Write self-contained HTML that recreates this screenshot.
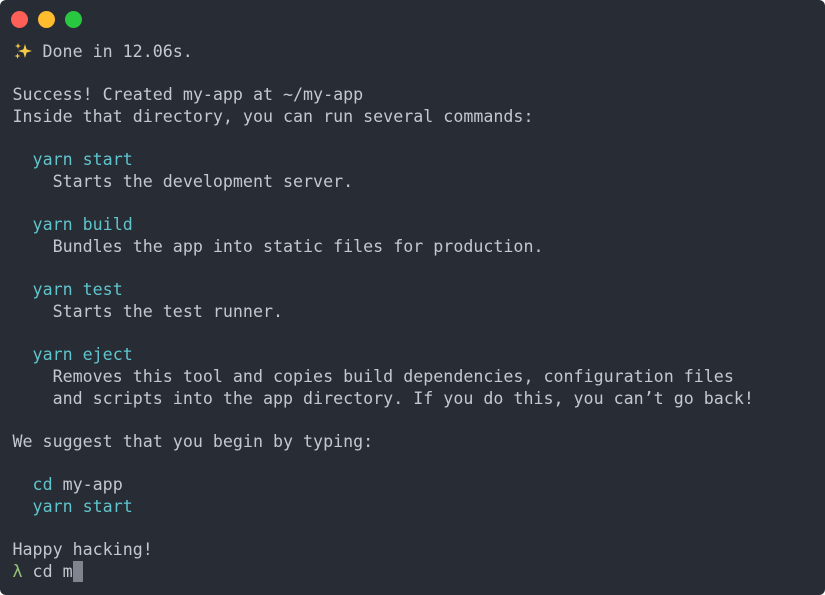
<!DOCTYPE html>
<html><head><meta charset="utf-8"><style>
html,body{margin:0;padding:0;background:#fff;width:825px;height:595px;overflow:hidden}
.win{position:absolute;left:0;top:0;width:825px;height:595px;background:#282c34;border-radius:6px;overflow:hidden}
.dot{position:absolute;top:11px;width:17px;height:17px;border-radius:50%}
pre{position:absolute;left:12.5px;top:41px;margin:0;font-family:"DejaVu Sans Mono","Liberation Mono",monospace;font-size:16.65px;line-height:21.67px;color:#c3c7ce;white-space:pre}
.c{color:#5fc4cc}.g{color:#98c379}
.cur{display:inline-block;width:10px;height:21px;background:#7f848e;vertical-align:top;margin-top:0px}
.sp{display:inline-block;width:20px;height:20px;vertical-align:top}
</style></head><body><div class="win">
<div class="dot" style="left:11px;background:#fe5f57"></div>
<div class="dot" style="left:38px;background:#febc2e"></div>
<div class="dot" style="left:65px;background:#28c840"></div>
<pre><svg class="sp" viewBox="0 0 20 20"><path d="M12 3 L13.6 8.4 L19 10 L13.6 11.6 L12 17 L10.4 11.6 L5 10 L10.4 8.4Z" fill="#f7c948"/><path d="M5 2 L5.8 4.2 L8 5 L5.8 5.8 L5 8 L4.2 5.8 L2 5 L4.2 4.2Z" fill="#f7c948"/><path d="M4.5 12 L5.2 14.3 L7.5 15 L5.2 15.7 L4.5 18 L3.8 15.7 L1.5 15 L3.8 14.3Z" fill="#f7c948"/></svg> Done in 12.06s.

Success! Created my-app at ~/my-app
Inside that directory, you can run several commands:

  <span class="c">yarn start</span>
    Starts the development server.

  <span class="c">yarn build</span>
    Bundles the app into static files for production.

  <span class="c">yarn test</span>
    Starts the test runner.

  <span class="c">yarn eject</span>
    Removes this tool and copies build dependencies, configuration files
    and scripts into the app directory. If you do this, you can’t go back!

We suggest that you begin by typing:

  <span class="c">cd</span> my-app
  <span class="c">yarn start</span>

Happy hacking!
<span class="g">λ</span> cd m<span class="cur"></span></pre>
</div></body></html>
